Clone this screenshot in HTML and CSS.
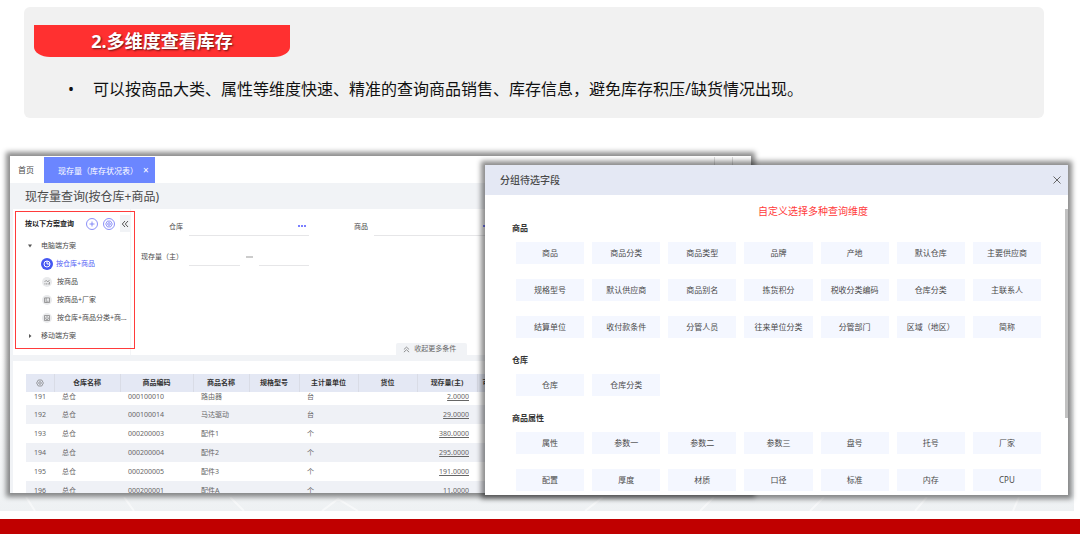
FILE: index.html
```
<!doctype html>
<html lang="zh-CN">
<head>
  <meta charset="UTF-8">
  <meta name="viewport" content="width=device-width, initial-scale=1.0">
  <title>多维度查看库存</title>
  <link rel="stylesheet" href="styles.css">
</head>
<body>
  <header class="intro">
    <h1>2.多维度查看库存</h1>
    <ul>
      <li>可以按商品大类、属性等维度快速、精准的查询商品销售、库存信息，避免库存积压/缺货情况出现。</li>
    </ul>
  </header>

  <main class="stage">
    <svg class="streaks" viewBox="0 0 1074 14" preserveAspectRatio="none" aria-hidden="true">
      <path d="M26 0l9 14M124 0l10 14M230 0l14 14M322 14l16-12l20 12M585 14l18-14M700 14l14-14M810 14l14-14M915 14l12-14M1013 14l6-14"/>
    </svg>

    <section class="app">
      <nav class="tabs">
        <button class="tab">首页</button>
        <button class="tab active">现存量（库存状况表） <span class="x">×</span></button>
        <span class="tools"><button aria-label="左移"></button><button aria-label="右移"></button></span>
      </nav>
      <h2>现存量查询(按仓库+商品)</h2>

      <div class="query">
        <aside class="plans">
          <div class="plans-head">
            <strong>按以下方案查询</strong>
            <button class="round" aria-label="新增"><svg viewBox="0 0 12 12"><circle cx="6" cy="6" r="5.5"/><path d="M3.5 6h5M6 3.5v5"/></svg></button>
            <button class="round" aria-label="设置"><svg viewBox="0 0 12 12"><circle cx="6" cy="6" r="5.5"/><path d="M4.4 3.1h3.2L9.3 6 7.6 8.9H4.4L2.7 6z"/><circle cx="6" cy="6" r="1.3"/></svg></button>
            <button class="fold" aria-label="收起"><svg viewBox="0 0 8 8"><path d="M4 1L1.300 4 4 7M7 1L4.300 4 7 7"/></svg></button>
          </div>
          <ul class="tree">
            <li class="branch"><svg viewBox="0 0 6 6"><path d="M1 1.500h4L3 4.500z"/></svg>电脑端方案</li>
            <li class="leaf on"><svg viewBox="0 0 12 12"><circle class="disc" cx="6" cy="6" r="6"/><circle cx="6" cy="6" r="3"/><path d="M6 3v3h3"/></svg>按仓库+商品</li>
            <li class="leaf"><svg viewBox="0 0 12 12"><circle class="disc" cx="6" cy="6" r="6"/><path d="M3 6l2-2 2 2 2-2.500M3.500 9V7.500M5.500 9V7.500M7.500 9V7.500M9 9V6"/></svg>按商品</li>
            <li class="leaf"><svg viewBox="0 0 12 12"><circle class="disc" cx="6" cy="6" r="6"/><path d="M3 3.500h6v5.500H3zM5 3.500V9M6.200 7.500h1.600"/></svg>按商品+厂家</li>
            <li class="leaf"><svg viewBox="0 0 12 12"><circle class="disc" cx="6" cy="6" r="6"/><path d="M3 3h6v6H3zM6 4.300l1.700 1.500-.7 1.900H5l-.7-1.900z"/></svg>按仓库+商品分类+商...</li>
            <li class="branch"><svg viewBox="0 0 6 6"><path d="M2 1v4l2.500-2z"/></svg>移动端方案</li>
          </ul>
          <div class="mark"></div>
        </aside>

        <form class="filters">
          <div class="fields">
            <div class="field">
              <label for="store">仓库</label>
              <input id="store" type="text">
              <button type="button" class="more" aria-label="选择仓库"></button>
            </div>
            <div class="field">
              <label for="goods">商品</label>
              <input id="goods" type="text">
              <button type="button" class="more" aria-label="选择商品"></button>
            </div>
            <div class="field range">
              <label for="min">现存量（主）</label>
              <input id="min" type="text">
              <i></i>
              <input id="max" type="text" aria-label="现存量上限">
            </div>
          </div>
          <button type="button" class="collapse"><svg viewBox="0 0 8 8"><path d="M1 4l3-2.700L7 4M1 7l3-2.700L7 7"/></svg>收起更多条件</button>
        </form>
      </div>

      <div class="stock">
        <table>
          <colgroup>
            <col class="c-no"><col class="c-store"><col class="c-code"><col class="c-name"><col class="c-spec"><col class="c-unit"><col class="c-unit"><col class="c-qty"><col>
          </colgroup>
          <thead>
            <tr>
              <th><svg viewBox="0 0 8 8"><path d="M2.300 1h3.400l1.700 3-1.700 3H2.300L.6 4z"/><circle cx="4" cy="4" r="1.300"/></svg></th>
              <th>仓库名称</th><th>商品编码</th><th>商品名称</th><th>规格型号</th><th>主计量单位</th><th>货位</th><th>现存量(主)</th><th class="last">可用量</th>
            </tr>
          </thead>
          <tbody>
            <tr class="cut"><td>191</td><td>总仓</td><td>000100010</td><td>路由器</td><td></td><td>台</td><td></td><td><a href="#">2.0000</a></td><td></td></tr>
            <tr><td>192</td><td>总仓</td><td>000100014</td><td>马达驱动</td><td></td><td>台</td><td></td><td><a href="#">29.0000</a></td><td></td></tr>
            <tr><td>193</td><td>总仓</td><td>000200003</td><td>配件1</td><td></td><td>个</td><td></td><td><a href="#">380.0000</a></td><td></td></tr>
            <tr><td>194</td><td>总仓</td><td>000200004</td><td>配件2</td><td></td><td>个</td><td></td><td><a href="#">295.0000</a></td><td></td></tr>
            <tr><td>195</td><td>总仓</td><td>000200005</td><td>配件3</td><td></td><td>个</td><td></td><td><a href="#">191.0000</a></td><td></td></tr>
            <tr><td>196</td><td>总仓</td><td>000200001</td><td>配件A</td><td></td><td>个</td><td></td><td><a href="#">11.0000</a></td><td></td></tr>
          </tbody>
        </table>
      </div>
    </section>

    <section class="dialog" role="dialog" aria-labelledby="dlg">
      <div class="dialog-head">
        <h2 id="dlg">分组待选字段</h2>
        <button aria-label="关闭"><svg viewBox="0 0 8 8"><path d="M.5.5l7 7M7.500.5l-7 7"/></svg></button>
      </div>
      <div class="dialog-body">
        <p class="note">自定义选择多种查询维度</p>
        <h3>商品</h3>
        <div class="chips">
          <button>商品</button><button>商品分类</button><button>商品类型</button><button>品牌</button><button>产地</button><button>默认仓库</button><button>主要供应商</button>
          <button>规格型号</button><button>默认供应商</button><button>商品别名</button><button>拣货积分</button><button>税收分类编码</button><button>仓库分类</button><button>主联系人</button>
          <button>结算单位</button><button>收付款条件</button><button>分管人员</button><button>往来单位分类</button><button>分管部门</button><button>区域（地区）</button><button>简称</button>
        </div>
        <h3>仓库</h3>
        <div class="chips">
          <button>仓库</button><button>仓库分类</button>
        </div>
        <h3>商品属性</h3>
        <div class="chips">
          <button>属性</button><button>参数一</button><button>参数二</button><button>参数三</button><button>盘号</button><button>托号</button><button>厂家</button>
          <button>配置</button><button>厚度</button><button>材质</button><button>口径</button><button>标准</button><button>内存</button><button>CPU</button>
        </div>
        <div class="scroll"></div>
      </div>
    </section>
  </main>

  <footer></footer>
</body>
</html>
```
FILE: styles.css
```
* { box-sizing: border-box; }
body { margin: 0; min-height: 100vh; display: flex; flex-direction: column; background: #fff; color: #4a4a4a; font: 7px/10px "Noto Sans", "Noto Sans CJK SC", sans-serif; }
h1, h2, h3, p, ul { margin: 0; padding: 0; }
ul { list-style: none; }
button { padding: 0; border: 0; background: none; font: inherit; color: inherit; cursor: pointer; }
svg { display: block; fill: none; stroke: currentColor; }

/* top card */
.intro { margin: 7px 36px 0 24px; height: 111px; padding: 18px 10px 0; background: #f1f1f1; border-radius: 6px; }
.intro h1 { width: 256px; height: 32px; border-radius: 0 0 16px 16px / 0 0 10px 10px; background: #ff3030; color: #fff; text-align: center; font: bold 18px/32px "Open Sans", "Noto Sans CJK SC", sans-serif; text-shadow: 1px 1px 2px rgba(0, 0, 0, .6); }
.intro ul { margin-top: 20px; padding-left: 34px; }
.intro li { display: flex; font-size: 16px; line-height: 24px; color: #111; }
.intro li::before { content: "•"; width: 25px; }

.stage { flex: 1; position: relative; margin: 0 6px 8px 0; padding: 38px 6px 18px 10px; background: linear-gradient(#fff 60%, #eef1f3); }
.streaks { position: absolute; left: 0; bottom: 0; width: 100%; height: 14px; stroke: #fff; stroke-width: 2; opacity: .5; }
footer { height: 15px; background: #c00000; }

/* stock window */
.app { position: relative; width: 70%; background: #fff; box-shadow: 0 0 5px 4px rgba(0, 0, 0, .45); }
.tabs { display: flex; height: 27px; padding-top: 1px; font-size: 8px; }
.tab { padding: 0 10px 0 8px; }
.tab.active { padding: 0 6px 0 14px; background: #6b86ff; color: #fff; }
.tab .x { margin-left: 3px; font-size: 10px; }
.tools { margin-left: auto; display: flex; padding-right: 1px; }
.tools button { width: 18px; border-left: 1px solid #ddd; }
.app > h2 { height: 26px; padding-left: 15px; background: #f1f3f6; font-size: 12px; font-weight: normal; line-height: 28px; }

.query { display: flex; height: 146px; border-left: 3px solid #f1f3f6; }
.plans { position: relative; width: 118px; border-right: 1px solid #f4f5f7; }
.mark { position: absolute; left: 2px; top: 2px; width: 120px; height: 138px; border: 1px solid #ff3b3b; pointer-events: none; }
.plans-head { display: flex; align-items: center; height: 17px; margin-top: 6px; padding-left: 12px; color: #222; }
.plans-head strong { flex: 1; }
.round { width: 12px; height: 12px; margin-right: 5px; color: #6d74f5; }
.round svg { stroke-width: .8; }
.fold { width: 10px; height: 17px; background: #f1f3f6; color: #555; }
.fold svg { width: 8px; margin: 0 1px; }
.tree { margin-top: 5px; }
.tree li { display: flex; align-items: center; height: 18px; white-space: nowrap; }
.branch { padding-left: 14px; }
.branch svg { width: 6px; margin-right: 8px; fill: #555; stroke: none; }
.leaf { padding-left: 29px; }
.leaf svg { width: 10px; margin-right: 5px; color: #777; stroke-width: .8; }
.leaf .disc { fill: #e9eaec; stroke: none; }
.leaf.on { padding-left: 28px; color: #5361f5; }
.leaf.on svg { width: 12px; margin-right: 3px; color: #fff; stroke-width: 1; }
.leaf.on .disc { fill: #4557f2; }

.filters { flex: 1; display: flex; flex-direction: column; justify-content: space-between; align-items: center; padding-right: 18px; }
.fields { align-self: flex-start; display: grid; grid-template-columns: 178px 178px; gap: 12px 7px; padding-top: 9px; }
.field { position: relative; display: flex; align-items: center; height: 18px; }
.field label { width: 52px; margin-right: 6px; text-align: right; white-space: nowrap; }
.field input { flex: 1; min-width: 0; height: 18px; padding: 0; border: 0; border-bottom: 1px solid #e6e6e8; background: none; font: inherit; outline: 0; }
.field i { width: 7px; height: 2px; margin: 0 6px; background: #ccc; }
.more { position: absolute; right: 3px; top: 7px; width: 8px; height: 2px; background: repeating-linear-gradient(90deg, #7b80ff 0 2px, transparent 2px 3px); }
.collapse { display: flex; align-items: center; gap: 4px; height: 12px; padding: 0 11px 0 7px; border-radius: 2px 2px 0 0; background: #f1f3f6; color: #666; }
.collapse svg { width: 7px; stroke-width: .8; }

.stock { height: 138px; padding: 13px 0 0 13px; border-top: 6px solid #f1f3f6; border-left: 3px solid #f1f3f6; overflow: hidden; }
table { width: 100%; border-collapse: collapse; table-layout: fixed; }
.c-no { width: 28px; }
.c-store { width: 66px; }
.c-code { width: 73px; }
.c-name { width: 56px; }
.c-spec { width: 50px; }
.c-unit { width: 59px; }
.c-qty { width: 60px; }
th { height: 18px; padding: 0; background: #e4e8f4; border-right: 1px solid #d9dce6; color: #333; }
th:first-child { color: #777; }
th svg { width: 8px; margin: 0 auto; stroke-width: .7; }
th.last { padding-left: 5px; border: 0; text-align: left; }
td { height: 19px; padding: 0 8px; color: #666; white-space: nowrap; }
td:first-child { padding: 0; text-align: center; }
td:nth-child(8) { text-align: right; }
td a { color: inherit; }
.cut td { height: 13px; padding-bottom: 3px; }
tbody tr:nth-child(even) { background: #eff1f6; }

/* field picker */
.dialog { position: absolute; top: 47px; left: 485px; right: 6px; background: #fff; box-shadow: 0 0 5px 4px rgba(0, 0, 0, .45); }
.dialog-head { display: flex; justify-content: space-between; align-items: center; height: 30px; padding: 0 7px 0 15px; background: #e4e8f4; }
.dialog-head h2 { font-size: 10px; font-weight: 500; }
.dialog-head button { width: 8px; height: 8px; color: #666; }
.dialog-body { position: relative; padding: 8px 27px 4px; }
.note { padding-left: 73px; color: #ff3b3b; font-size: 10px; line-height: 16px; text-align: center; }
h3 { margin-top: 16px; font-size: 8px; line-height: 12px; color: #333; }
.note + h3 { margin-top: 3px; }
.chips { display: grid; grid-template-columns: repeat(7, 1fr); gap: 15px 8px; margin: 8px 0 0 4px; }
.chips button { height: 22px; background: #f4f7ff; font-size: 8px; white-space: nowrap; }
.scroll { position: absolute; top: 14px; right: 0; width: 3px; height: 209px; background: #c1c1c1; }
```
